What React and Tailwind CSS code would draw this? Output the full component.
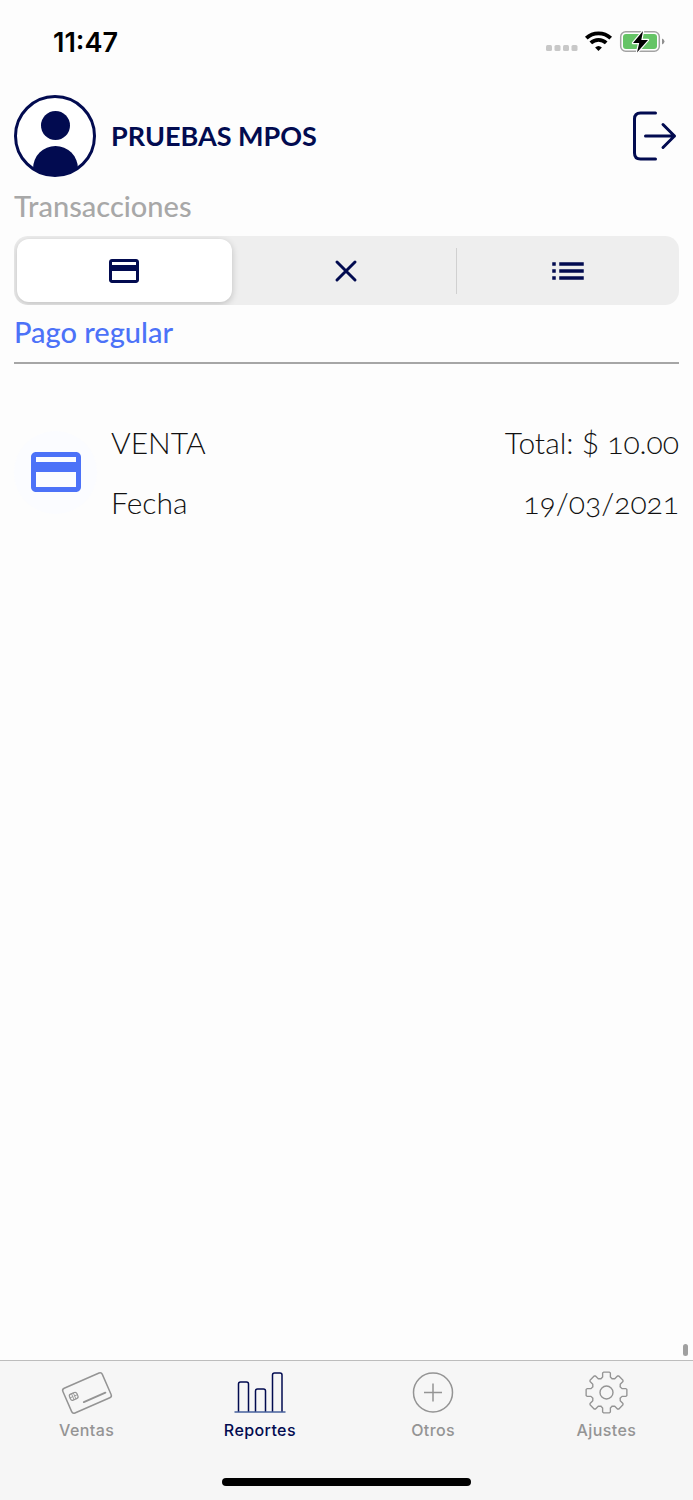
import { useState } from "react";
import { MdCreditCard, MdList } from "react-icons/md";

const NAVY = "#020b50";

/* Outline of an eight-tooth gear centred on 0,0 */
const TOOTH = [
  [-6, -14],
  [-4, -16],
  [-4, -20],
  [-3, -21],
  [3, -21],
  [4, -20],
  [4, -16],
  [6, -14],
];

const gearPath =
  [...Array(8)]
    .flatMap((_, i) => {
      const a = (i * Math.PI) / 4;
      return TOOTH.map(([x, y]) => [
        (x * Math.cos(a) - y * Math.sin(a)).toFixed(2),
        (x * Math.sin(a) + y * Math.cos(a)).toFixed(2),
      ]);
    })
    .map(([x, y], i) => `${i ? "L" : "M"}${x} ${y}`)
    .join("") + "Z";

const segments = [
  { id: "pago", title: "Pago regular", icon: <MdCreditCard size={36} /> },
  { id: "cancel", title: "Cancelaciones", icon: <CloseIcon /> },
  { id: "lista", title: "Lista", icon: <MdList size={42} /> },
];

const transactions = [
  { id: 1, type: "VENTA", total: "10.00", date: "19/03/2021" },
];

const tabs = [
  { label: "Ventas", icon: <CardIcon /> },
  { label: "Reportes", icon: <ChartIcon /> },
  { label: "Otros", icon: <PlusIcon /> },
  { label: "Ajustes", icon: <GearIcon /> },
];

function CloseIcon() {
  return (
    <svg width="24" height="24" viewBox="0 0 24 24" fill="none" stroke="currentColor" strokeWidth="3" strokeLinecap="round">
      <path d="M3 3l18 18M21 3L3 21" />
    </svg>
  );
}

function CardIcon() {
  return (
    <svg width="54" height="46" viewBox="0 0 54 46" fill="none" stroke="currentColor" strokeWidth="1.5" strokeLinecap="round">
      <g transform="rotate(-23.5 27 23)">
        <rect x="5.5" y="9.5" width="43" height="27" rx="2.5" />
        <rect x="9.5" y="17.5" width="8" height="6.5" rx="2" strokeWidth="1.2" />
        <path d="M9.5 20.7h3M14.5 20.7h3M12.5 17.5v6.5M14.5 17.5v6.5" strokeWidth="0.8" />
        <path d="M20.5 30h23.5" strokeWidth="1.9" />
      </g>
    </svg>
  );
}

function ChartIcon() {
  return (
    <svg width="54" height="46" viewBox="0 0 54 46" fill="none" stroke="currentColor" strokeWidth="1.5">
      <path d="M5.5 42V14q0-2 2-2h6q2 0 2 2V42M22.5 42V21q0-2 2-2h6q2 0 2 2V42M39.5 42V5q0-2 2-2H47q2 0 2 2V42" />
      <path d="M1.5 42h51" stroke="#46609c" strokeWidth="1.6" />
    </svg>
  );
}

function PlusIcon() {
  return (
    <svg width="54" height="46" viewBox="0 0 54 46" fill="none" stroke="currentColor" strokeWidth="1.5">
      <circle cx="27" cy="22.5" r="19.5" />
      <path d="M18 22.5h18M27 13.5v18" />
    </svg>
  );
}

function GearIcon() {
  return (
    <svg width="54" height="46" viewBox="0 0 54 46" fill="none" stroke="currentColor" strokeWidth="1.4" strokeLinejoin="round">
      <g transform="translate(27.5 22.5)">
        <path d={gearPath} transform="scale(0.97)" />
        <circle r="6.5" />
      </g>
    </svg>
  );
}

function StatusBar() {
  return (
    <div className="flex h-[84px] items-center justify-between pl-[53px] pr-7 font-['Inter',sans-serif]">
      <span className="text-[27px] font-semibold leading-none text-black">11:47</span>
      <svg width="120" height="30" viewBox="0 0 120 30">
        <g fill="#c8c8c8">
          <rect x="1" y="18" width="6" height="6" rx="1.5" />
          <rect x="9.5" y="18" width="6" height="6" rx="1.5" />
          <rect x="18" y="18" width="6" height="6" rx="1.5" />
          <rect x="26.5" y="18" width="6" height="6" rx="1.5" />
        </g>
        <g fill="none" stroke="#000" strokeWidth="3.8">
          <path d="M41.3 11.2a17.6 17.6 0 0 1 24.4 0" />
          <path d="M45.8 15.9a11.2 11.2 0 0 1 15.4 0" />
        </g>
        <path d="M53.5 24l-3.4-3.5a5 5 0 0 1 6.8 0z" />
        <rect x="75.7" y="4.7" width="38.6" height="19.6" rx="5" fill="#fff" stroke="#a3a3a3" strokeWidth="1.5" />
        <rect x="78" y="7" width="34" height="15" rx="3" fill="#65c466" />
        <path d="M117 11.5q2.500 1 2.500 3t-2.500 3z" fill="#8f8f8f" />
        <path
          d="M98 4L88 16h6.2l-2.200 9.500L103 13h-6.700z"
          stroke="#fff"
          strokeWidth="2.4"
          strokeLinejoin="round"
          paintOrder="stroke"
        />
      </svg>
    </div>
  );
}

function Avatar() {
  return (
    <svg width="82" height="82" viewBox="0 0 82 82" className="shrink-0">
      <clipPath id="avatar-clip">
        <circle cx="41" cy="41" r="40" />
      </clipPath>
      <circle cx="41" cy="41" r="39.5" fill="#fff" stroke={NAVY} strokeWidth="3" />
      <circle cx="41.5" cy="30.5" r="14.500" fill={NAVY} />
      <circle cx="41.5" cy="73.500" r="22.500" fill={NAVY} clipPath="url(#avatar-clip)" />
    </svg>
  );
}

export default function App() {
  const [segment, setSegment] = useState("pago");
  const [tab, setTab] = useState("Reportes");

  return (
    <div className="relative flex min-h-screen flex-col bg-[#fdfdfd] font-['Lato',sans-serif]">
      <StatusBar />

      {/* HEADER */}
      <header className="mt-[11px] flex items-center gap-[15px] px-[14px]">
        <Avatar />
        <h1 className="flex-1 text-[27px] font-bold leading-8 text-[#020b50]">PRUEBAS MPOS</h1>
        <button type="button" aria-label="Salir" className="text-[#020b50]">
          <svg width="48" height="52" viewBox="0 0 48 52" fill="none" stroke="currentColor" strokeWidth="3" strokeLinecap="round" strokeLinejoin="round">
            <path d="M24.5 3H9.500q-6 0-6 6v34q0 6 6 6H24.500M14.500 26H43.500M32 14.500L43.500 26 32 37.500" />
          </svg>
        </button>
      </header>

      <main className="flex-1 px-[14px]">
        <h2 className="mt-[11px] text-[29px] font-medium leading-9 text-[#a8a8a8]">Transacciones</h2>

        {/* SEGMENTED CONTROL */}
        <div className="mt-3 flex h-[69px] overflow-hidden rounded-[14px] bg-[#eeeeee] py-[3px] text-[#020b50]">
          {segments.map((s, i) => (
            <button
              key={s.id}
              type="button"
              aria-label={s.title}
              aria-pressed={segment === s.id}
              onClick={() => setSegment(s.id)}
              className="flex flex-1 items-center"
            >
              <span
                className={
                  segment === s.id
                    ? "ml-[3px] mr-1 flex h-full flex-1 items-center justify-center rounded-xl bg-white shadow-[0_2px_7px_rgba(0,0,0,0.2)]"
                    : "flex flex-1 items-center justify-center"
                }
              >
                {s.icon}
              </span>
              {i === 1 && <span className="h-[46px] w-px bg-[#d0d0d0]" />}
            </button>
          ))}
        </div>

        <h3 className="mt-[9px] border-b-2 border-[#a6a6a6] pb-3 text-[29px] font-medium leading-9 text-[#4c72f8]">
          Pago regular
        </h3>

        {/* TRANSACTIONS */}
        <ul className="mt-[60px]">
          {transactions.map((t) => (
            <li key={t.id} className="flex items-center gap-[14px]">
              <span className="flex size-[83px] shrink-0 items-center justify-center rounded-full bg-[#fbfcff] text-[#4c72f8]">
                <MdCreditCard size={60} />
              </span>
              <div className="flex flex-1 flex-col gap-6 text-[30px] font-light leading-9 text-[#111111]">
                <div className="flex justify-between">
                  <span>{t.type}</span>
                  <span>
                    Total: $ <span className="[font-variant-numeric:oldstyle-nums]">{t.total}</span>
                  </span>
                </div>
                <div className="flex justify-between">
                  <span>Fecha</span>
                  <span className="[font-variant-numeric:oldstyle-nums]">{t.date}</span>
                </div>
              </div>
            </li>
          ))}
        </ul>
      </main>

      {/* SCROLL THUMB */}
      <div className="absolute bottom-36 right-[5px] h-3 w-[5px] rounded-full bg-[#a0a0a0]" />

      {/* TAB BAR */}
      <footer className="flex h-[140px] flex-col items-center justify-between border-t border-[#bdbdbd] bg-[#f6f6f6] pb-[14px] pt-[9px]">
        <nav className="flex w-full">
          {tabs.map((t) => (
            <button
              key={t.label}
              type="button"
              onClick={() => setTab(t.label)}
              className={`flex flex-1 flex-col items-center gap-[2px] font-['Inter',sans-serif] text-base font-medium leading-6 tracking-wide ${
                tab === t.label ? "text-[#020b50]" : "text-[#949494]"
              }`}
            >
              {t.icon}
              {t.label}
            </button>
          ))}
        </nav>
        <div className="h-2 w-[36%] rounded-full bg-black" />
      </footer>
    </div>
  );
}
